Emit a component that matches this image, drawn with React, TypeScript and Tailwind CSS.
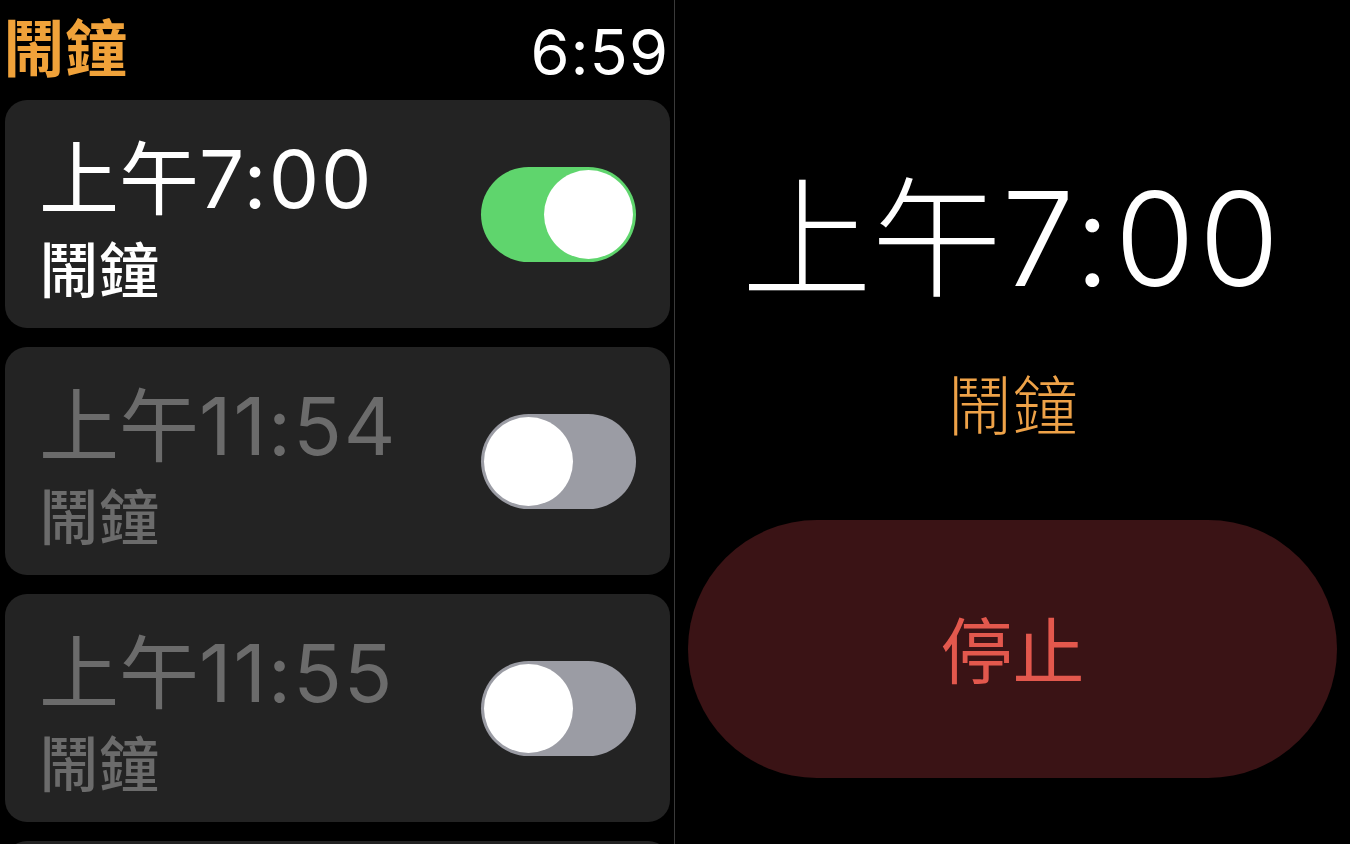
import React from "react";

const LAT = { fontFamily: 'Inter, "Noto Sans CJK TC", sans-serif' };

function Toggle({ on }: { on: boolean }) {
  return (
    <div
      className={`flex h-[95px] w-[155px] shrink-0 items-center rounded-full px-[3px] ${
        on ? "justify-end bg-[#5fd56d]" : "justify-start bg-[#9b9ca4]"
      }`}
    >
      <div className="h-[89px] w-[89px] rounded-full bg-white" />
    </div>
  );
}

function Card({ time, on }: { time: string; on: boolean }) {
  const cjk = time.slice(0, 2);
  const digits = time.slice(2);
  return (
    <div className="flex h-[228px] shrink-0 items-center justify-between rounded-[22px] bg-[#232323] pl-[34px] pr-[34px]">
      <div className={`flex flex-col ${on ? "text-white" : "text-[#6b6b6b]"}`}>
        <div className="mt-[12px] h-[80px] whitespace-nowrap text-[80px] leading-[80px]">
          <span>{cjk}</span>
          <span className="tracking-[2px]">{digits}</span>
        </div>
        <div className="mt-[22px] h-[60px] text-[60px] font-medium leading-[60px]">鬧鐘</div>
      </div>
      <Toggle on={on} />
    </div>
  );
}

export default function App() {
  return (
    <div className="flex h-[844px] w-[1350px] overflow-hidden bg-black" style={LAT}>
      {/* Left: alarm list */}
      <div className="flex h-[844px] w-[674px] shrink-0 flex-col overflow-hidden pl-[5px] pr-[4px]">
        <div className="flex h-[100px] shrink-0 items-start justify-between pt-[19px]">
          <div className="-ml-[2px] text-[62px] font-bold leading-[62px] text-[#f0a23a]">鬧鐘</div>
          <div className="mt-[2px] pr-[1px] text-[63px] tracking-[1px] leading-[63px] text-white">6:59</div>
        </div>
        <div className="flex flex-col gap-[19px]">
          <Card time="上午7:00" on={true} />
          <Card time="上午11:54" on={false} />
          <Card time="上午11:55" on={false} />
          <div className="h-[228px] shrink-0 rounded-[22px] bg-[#232323]" />
        </div>
      </div>
      {/* Divider */}
      <div className="h-[844px] w-px shrink-0 bg-[#3a3a3a]" />
      {/* Right: ringing alarm */}
      <div className="flex h-[844px] flex-1 flex-col items-center px-[13px] pt-[175px]">
        <div className="h-[128px] whitespace-nowrap text-[130px] font-light leading-[128px] text-white">
          <span>上午</span>
          <span className="tracking-[4px]">7:00</span>
        </div>
        <div className="mt-[72px] h-[64px] text-[65px] font-light leading-[64px] text-[#eea248]">鬧鐘</div>
        <div className="mt-[81px] flex h-[258px] w-full items-center justify-center rounded-full bg-[#3a1315]">
          <span className="mt-[6px] text-[72px] leading-[72px] text-[#e3584d]">停止</span>
        </div>
      </div>
    </div>
  );
}
